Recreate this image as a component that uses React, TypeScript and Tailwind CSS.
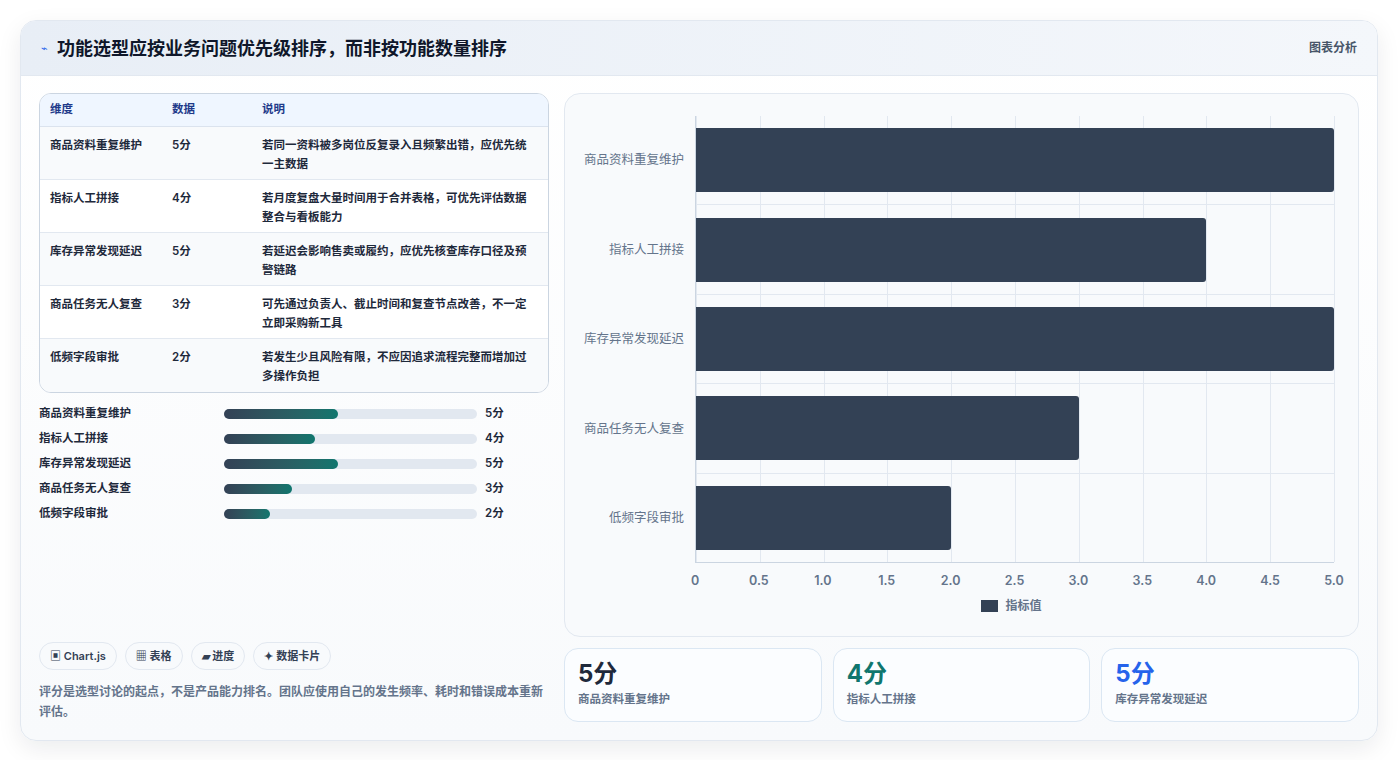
const ROWS = [
  { name: '商品资料重复维护', v: 5, note: '若同一资料被多岗位反复录入且频繁出错，应优先统一主数据' },
  { name: '指标人工拼接', v: 4, note: '若月度复盘大量时间用于合并表格，可优先评估数据整合与看板能力' },
  { name: '库存异常发现延迟', v: 5, note: '若延迟会影响售卖或履约，应优先核查库存口径及预警链路' },
  { name: '商品任务无人复查', v: 3, note: '可先通过负责人、截止时间和复查节点改善，不一定立即采购新工具' },
  { name: '低频字段审批', v: 2, note: '若发生少且风险有限，不应因追求流程完整而增加过多操作负担' },
];

const TICKS = ['0', '0.5', '1.0', '1.5', '2.0', '2.5', '3.0', '3.5', '4.0', '4.5', '5.0'];

function BarChart() {
  return (
    <div className="flex-1 rounded-2xl border border-[#e2e8f0] bg-[#f8fafc] pt-[22px] pr-[24px] pl-[14px] flex flex-col">
      <div className="flex h-[447px]">
        {/* y labels */}
        <div className="w-[116px] flex flex-col">
          {ROWS.map((r) => (
            <div key={r.name} className="flex-1 flex items-center justify-end pr-[11px] text-[12.5px] text-[#64748b]">{r.name}</div>
          ))}
        </div>
        {/* plot */}
        <div className="relative flex-1 border-l border-b border-[#cbd5e1]">
          {TICKS.map((t, i) => (
            <div key={t} className="absolute top-0 bottom-0 border-l border-[#e2e8f0]" style={{ left: `${i * 10}%` }} />
          ))}
          <div className="absolute inset-0 flex flex-col">
            {ROWS.map((r) => (
              <div key={r.name} className="flex-1 flex items-center border-t border-[#e2e8f0] first:border-t-0">
                <div className="h-[64px] bg-[#334155] rounded-r-[3px]" style={{ width: `${r.v * 20}%` }} />
              </div>
            ))}
          </div>
        </div>
      </div>
      <div className="relative ml-[116px] h-[30px]">
        {TICKS.map((t, i) => (
          <span key={t} className="absolute top-[9px] -translate-x-1/2 text-[12.5px] font-semibold text-[#64748b]" style={{ left: `${i * 10}%` }}>{t}</span>
        ))}
      </div>
      <div className="flex items-center justify-center gap-[7px] mt-[4px] ml-[110px] text-[12px] font-semibold text-[#64748b]">
        <span className="w-[17px] h-[12px] bg-[#334155]" />指标值
      </div>
    </div>
  );
}

export default function App() {
  return (
    <div className="min-h-[760px] bg-white p-[20px] pr-[21px]" style={{ fontFamily: 'Inter, "Noto Sans CJK SC", sans-serif' }}>
      <div className="rounded-[16px] border border-[#e2e8f0] bg-gradient-to-b from-white to-[#f8fafc] shadow-[0_8px_24px_rgba(15,23,42,0.08)] overflow-hidden">
        <div className="h-[55px] flex items-center justify-between px-[20px] bg-gradient-to-r from-[#e8eef6] to-[#f4f7fb] border-b border-[#e2e8f0]">
          <div className="flex items-center gap-[9px]">
            <span className="text-[11px] text-[#2563eb]">⌁</span>
            <h1 className="text-[18px] font-bold text-[#0f172a]">功能选型应按业务问题优先级排序，而非按功能数量排序</h1>
          </div>
          <span className="text-[12px] font-semibold text-[#475569]">图表分析</span>
        </div>
        <div className="flex gap-[15px] px-[18px] pt-[17px] pb-[18px]">
          {/* left */}
          <div className="w-[510px] flex flex-col">
            <div className="rounded-[12px] border border-[#cbd5e1] overflow-hidden bg-white">
              <div className="grid grid-cols-[122px_90px_1fr] h-[33px] items-center px-[10px] bg-[#eff6ff] border-b border-[#dbe3ee] text-[11.5px] font-semibold text-[#1e3a8a]">
                <span>维度</span><span>数据</span><span>说明</span>
              </div>
              {ROWS.map((r, i) => (
                <div key={r.name} className={`grid grid-cols-[122px_90px_1fr] h-[53px] pt-[9px] px-[10px] text-[11.5px] font-semibold text-[#1e293b] leading-[19px] ${i % 2 ? 'bg-white' : 'bg-[#f8fafc]'} ${i < 4 ? 'border-b border-[#e2e8f0]' : ''}`}>
                  <span>{r.name}</span><span>{r.v}分</span><span className="pr-[4px]">{r.note}</span>
                </div>
              ))}
            </div>
            <div className="mt-[8px] flex flex-col">
              {ROWS.map((r) => (
                <div key={r.name} className="h-[25px] flex items-center text-[11.5px] font-semibold text-[#1e293b]">
                  <span className="w-[185px]">{r.name}</span>
                  <div className="w-[253px] h-[10px] rounded-full bg-[#e2e8f0]">
                    <div className="h-full rounded-full bg-gradient-to-r from-[#334155] to-[#0f766e]" style={{ width: `${r.v * 9}%` }} />
                  </div>
                  <span className="ml-[8px]">{r.v}分</span>
                </div>
              ))}
            </div>
            <div className="flex-1" />
            <div className="flex gap-[8px] text-[11px] font-semibold text-[#334155]">
              {['▣ Chart.js', '▦ 表格', '▰ 进度', '✦ 数据卡片'].map((c) => (
                <span key={c} className="h-[28px] px-[10px] flex items-center rounded-full border border-[#e2e8f0] bg-[#f8fafc]">{c}</span>
              ))}
            </div>
            <p className="mt-[12px] text-[12px] font-semibold leading-[20px] text-[#64748b]">评分是选型讨论的起点，不是产品能力排名。团队应使用自己的发生频率、耗时和错误成本重新评估。</p>
          </div>
          {/* right */}
          <div className="flex-1 flex flex-col gap-[11px]">
            <div className="h-[544px] flex"><BarChart /></div>
            <div className="grid grid-cols-3 gap-[11px]">
              {[
                { v: '5分', c: 'text-[#1e293b]', l: '商品资料重复维护' },
                { v: '4分', c: 'text-[#0f766e]', l: '指标人工拼接' },
                { v: '5分', c: 'text-[#2563eb]', l: '库存异常发现延迟' },
              ].map((s) => (
                <div key={s.l} className="h-[74px] rounded-[14px] border border-[#dbe7f3] bg-[#fbfdff] px-[13px] pt-[9px]">
                  <div className={`text-[24px] font-bold leading-[32px] ${s.c}`}>{s.v}</div>
                  <div className="text-[11.5px] font-semibold text-[#64748b] mt-[1px]">{s.l}</div>
                </div>
              ))}
            </div>
          </div>
        </div>
      </div>
    </div>
  );
}
